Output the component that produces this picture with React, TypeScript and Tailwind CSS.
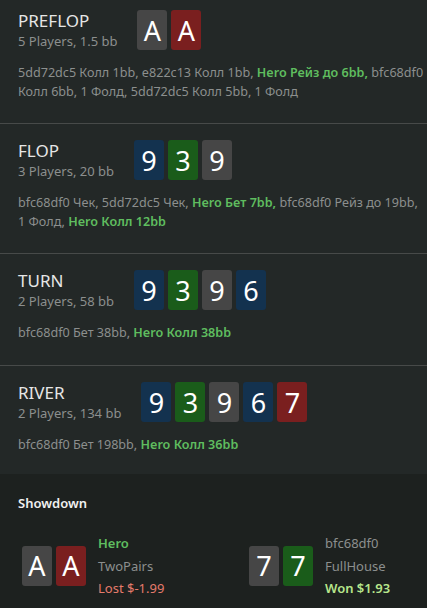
type Suit = "gray" | "red" | "blue" | "green";

const suitBg: Record<Suit, string> = {
  gray: "bg-[#464646]",
  red: "bg-[#7a1f1f]",
  blue: "bg-[#13324f]",
  green: "bg-[#1a5c1a]",
};

type CardT = { rank: string; suit: Suit };

const Card = ({ rank, suit }: CardT) => (
  <div
    className={`flex h-[40px] w-[30px] items-center justify-center rounded-[3px] text-[27px] leading-none text-white ${suitBg[suit]}`}
  >
    {rank}
  </div>
);

const Cards = ({ cards }: { cards: CardT[] }) => (
  <div className="flex gap-[4px]">
    {cards.map((c, i) => (
      <Card key={i} {...c} />
    ))}
  </div>
);

type Action = { text: string; hero?: boolean };

type Street = {
  name: string;
  info: string;
  cards: CardT[];
  actions: Action[];
  pad: string;
};

const streets: Street[] = [
  {
    name: "PREFLOP",
    info: "5 Players, 1.5 bb",
    pad: "pt-[10px] pb-[22px]",
    cards: [
      { rank: "A", suit: "gray" },
      { rank: "A", suit: "red" },
    ],
    actions: [
      { text: "5dd72dc5 Колл 1bb, e822c13 Колл 1bb, " },
      { text: "Hero Рейз до 6bb, ", hero: true },
      { text: "bfc68df0 Колл 6bb, 1 Фолд, 5dd72dc5 Колл 5bb, 1 Фолд" },
    ],
  },
  {
    name: "FLOP",
    info: "3 Players, 20 bb",
    pad: "pt-4 pb-[22px] border-t border-[#474a49]",
    cards: [
      { rank: "9", suit: "blue" },
      { rank: "3", suit: "green" },
      { rank: "9", suit: "gray" },
    ],
    actions: [
      { text: "bfc68df0 Чек, 5dd72dc5 Чек, " },
      { text: "Hero Бет 7bb, ", hero: true },
      { text: "bfc68df0 Рейз до 19bb, 1 Фолд, " },
      { text: "Hero Колл 12bb", hero: true },
    ],
  },
  {
    name: "TURN",
    info: "2 Players, 58 bb",
    pad: "pt-4 pb-[23px] border-t border-[#474a49]",
    cards: [
      { rank: "9", suit: "blue" },
      { rank: "3", suit: "green" },
      { rank: "9", suit: "gray" },
      { rank: "6", suit: "blue" },
    ],
    actions: [
      { text: "bfc68df0 Бет 38bb, " },
      { text: "Hero Колл 38bb", hero: true },
    ],
  },
  {
    name: "RIVER",
    info: "2 Players, 134 bb",
    pad: "pt-4 pb-5 border-t border-[#474a49]",
    cards: [
      { rank: "9", suit: "blue" },
      { rank: "3", suit: "green" },
      { rank: "9", suit: "gray" },
      { rank: "6", suit: "blue" },
      { rank: "7", suit: "red" },
    ],
    actions: [
      { text: "bfc68df0 Бет 198bb, " },
      { text: "Hero Колл 36bb", hero: true },
    ],
  },
];

const StreetBlock = ({ street }: { street: Street }) => (
  <div className={`pl-[18px] ${street.pad}`}>
    <div className="flex items-center">
      <div className="flex flex-col">
        <div className="text-[17px] leading-[22px] text-[#e6e6e6]">{street.name}</div>
        <div className="text-[13px] leading-[18px] text-[#8c8f8e]">{street.info}</div>
      </div>
      <div className="ml-5">
        <Cards cards={street.cards} />
      </div>
    </div>
    <p className="mt-[13px] text-[12.6px] leading-[19px] text-[#8c8f8e]">
      {street.actions.map((a, i) =>
        a.hero ? (
          <span key={i} className="font-semibold text-[#5fbd5f]">
            {a.text}
          </span>
        ) : (
          <span key={i}>{a.text}</span>
        )
      )}
    </p>
  </div>
);

const Player = ({
  cards,
  name,
  hand,
  result,
  hero,
  won,
}: {
  cards: CardT[];
  name: string;
  hand: string;
  result: string;
  hero?: boolean;
  won?: boolean;
}) => (
  <div className="flex items-center gap-3">
    <Cards cards={cards} />
    <div className="flex flex-col text-[13px] leading-[22.5px]">
      <span className={hero ? "font-semibold text-[#5fbd5f]" : "text-[#8c8f8e]"}>{name}</span>
      <span className="text-[#8c8f8e]">{hand}</span>
      <span className={won ? "font-semibold text-[#b8e68c]" : "text-[#e57b6c]"}>{result}</span>
    </div>
  </div>
);

const App = () => {
  return (
    <div
      className="min-h-screen w-full bg-[#232827]"
      style={{ fontFamily: '"Noto Sans", "Open Sans", sans-serif' }}
    >
      {streets.map((s) => (
        <StreetBlock key={s.name} street={s} />
      ))}
      <div className="bg-[#1d211f] pl-[18px] pt-5 pb-4">
        <div className="text-[13px] font-semibold leading-[18px] text-[#f0f0f0]">Showdown</div>
        <div className="mt-5 flex pl-1">
          <div className="w-[227px]">
            <Player
              cards={[
                { rank: "A", suit: "gray" },
                { rank: "A", suit: "red" },
              ]}
              name="Hero"
              hand="TwoPairs"
              result="Lost $-1.99"
              hero
            />
          </div>
          <Player
            cards={[
              { rank: "7", suit: "gray" },
              { rank: "7", suit: "green" },
            ]}
            name="bfc68df0"
            hand="FullHouse"
            result="Won $1.93"
            won
          />
        </div>
      </div>
    </div>
  );
};

export default App;
